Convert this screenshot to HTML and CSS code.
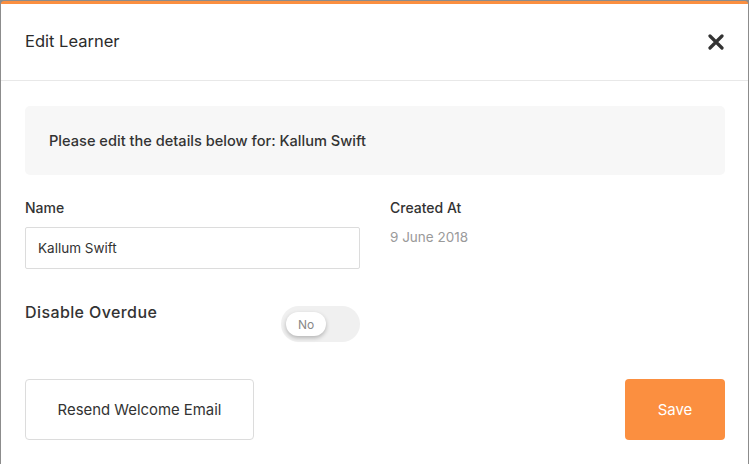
FILE: index.html
```html
<!DOCTYPE html>
<html>
<head>
<meta charset="utf-8">
<link rel="stylesheet" href="styles.css">
</head>
<body>
<div class="modal">
  <div class="modal-header">
    <h1 class="title">Edit Learner</h1>
    <button class="close" aria-label="Close">
      <svg width="16" height="16" viewBox="0 0 16 16"><path d="M2 2 L14 14 M14 2 L2 14" stroke="#333" stroke-width="3.2" stroke-linecap="round"/></svg>
    </button>
  </div>
  <div class="modal-body">
    <div class="info">Please edit the details below for: Kallum Swift</div>
    <div class="fields">
      <div class="field">
        <label class="label">Name</label>
        <input class="input" type="text" value="Kallum Swift">
      </div>
      <div class="field">
        <span class="label">Created At</span>
        <span class="value">9 June 2018</span>
      </div>
    </div>
    <div class="toggle-row">
      <span class="toggle-label">Disable Overdue</span>
      <div class="toggle"><span class="knob">No</span></div>
    </div>
    <div class="actions">
      <button class="btn btn-outline">Resend Welcome Email</button>
      <button class="btn btn-primary">Save</button>
    </div>
  </div>
</div>
</body>
</html>
```
FILE: styles.css
```css
* { box-sizing: border-box; }
html, body { margin: 0; padding: 0; }
body {
  background: #8c8c8c;
  font-family: Inter, "Open Sans", "Liberation Sans", sans-serif;
  color: #333;
  width: 749px;
  height: 464px;
  overflow: hidden;
}
.modal {
  margin: 1px 1px 0 1px;
  background: #fff;
  border-top: 3px solid #fb8f40;
  border-radius: 3px 3px 0 0;
  height: 463px;
}
.modal-header {
  height: 77px;
  border-bottom: 1px solid #e8e8e8;
  display: flex;
  align-items: center;
  justify-content: space-between;
  padding: 0 24px 0 24px;
}
.title {
  margin: 0;
  font-size: 16.5px;
  font-weight: 400;
  color: #2b2b2b;
  padding-bottom: 2px;
}
.close {
  border: 0;
  background: none;
  padding: 0;
  width: 16px;
  height: 16px;
  display: flex;
}
.modal-body {
  padding: 25px 23px 0 24px;
}
.info {
  background: #f7f7f7;
  border-radius: 5px;
  height: 69px;
  display: flex;
  align-items: center;
  padding-left: 24px;
  font-size: 14.6px;
  font-weight: 500;
  color: #333;
}
.fields {
  display: flex;
  gap: 30px;
  margin-top: 24px;
}
.field {
  display: flex;
  flex-direction: column;
}
.field:first-child { width: 335px; }
.label {
  font-size: 14px;
  font-weight: 500;
  color: #333;
  line-height: 18px;
}
.input {
  margin-top: 10px;
  height: 42px;
  border: 1px solid #dcdcdc;
  border-radius: 2px;
  padding: 0 12px;
  font-family: inherit;
  font-size: 13.5px;
  color: #333;
  outline: none;
}
.value {
  margin-top: 11px;
  font-size: 13.5px;
  color: #9a9a9a;
  line-height: 18px;
}
.toggle-row {
  display: flex;
  align-items: center;
  margin-top: 37px;
}
.toggle-label {
  width: 256px;
  font-size: 16px;
  font-weight: 500;
  letter-spacing: 0.4px;
  color: #333;
  align-self: flex-start;
  margin-top: -4px;
}
.toggle {
  width: 79px;
  height: 36px;
  border-radius: 18px;
  background: #f0f0f0;
  display: flex;
  align-items: center;
  padding-left: 5px;
}
.knob {
  width: 40px;
  height: 24px;
  border-radius: 12px;
  background: #fff;
  box-shadow: 0 2px 4px rgba(0,0,0,0.25);
  font-size: 12px;
  color: #888;
  display: flex;
  align-items: center;
  justify-content: center;
}
.actions {
  display: flex;
  justify-content: space-between;
  margin-top: 37px;
}
.btn {
  height: 61px;
  border-radius: 4px;
  font-family: inherit;
  font-size: 14.9px;
}
.btn-outline {
  width: 229px;
  background: #fff;
  border: 1px solid #dcdcdc;
  color: #333;
}
.btn-primary {
  width: 100px;
  background: #fb8f40;
  border: 0;
  color: #fff;
}
```
